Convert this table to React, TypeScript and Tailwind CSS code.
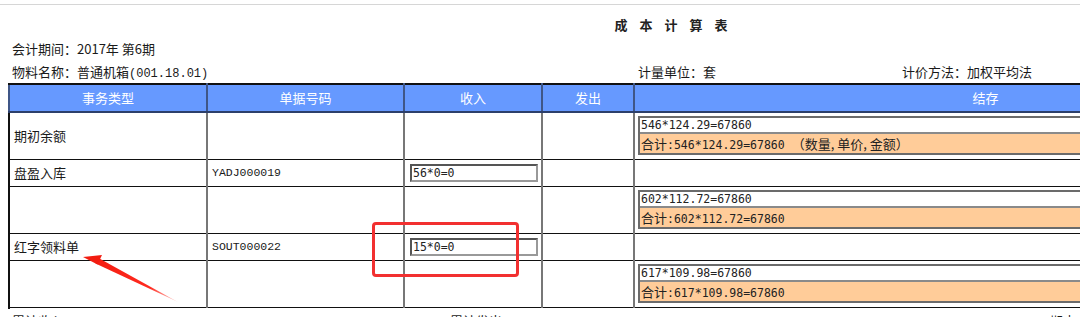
import React from "react"

const cjk = { fontFamily: '"Noto Sans CJK SC", "Noto Sans", sans-serif' }
const mono = { fontFamily: '"Liberation Mono", "Noto Sans CJK SC", monospace' }
const digits = { fontFamily: '"DejaVu Sans Mono", "Noto Sans CJK SC", monospace' }

type Row = {
  type: string
  code?: string
  income?: string
  balance?: [string, string]
  tall: boolean
}

const rows: Row[] = [
  {
    type: "期初余额",
    tall: true,
    balance: ["546*124.29=67860", "合计:546*124.29=67860 （数量,单价,金额）"],
  },
  { type: "盘盈入库", code: "YADJ000019", income: "56*0=0", tall: false },
  { type: "", tall: true, balance: ["602*112.72=67860", "合计:602*112.72=67860"] },
  { type: "红字领料单", code: "SOUT000022", income: "15*0=0", tall: false },
  { type: "", tall: true, balance: ["617*109.98=67860", "合计:617*109.98=67860"] },
]

function ValueInput({ value }: { value: string }) {
  return (
    <div
      className="ml-[1px] h-[18px] w-[128px] border-2 border-t-[#555] border-l-[#555] border-r-[#999] border-b-[#999] bg-white pl-px text-[11.5px] leading-[14px] text-[#222]"
      style={digits}
    >
      {value}
    </div>
  )
}

function BalanceBox({ lines }: { lines: [string, string] }) {
  return (
    <div className="ml-[2px] w-[460px] border-2 border-[#6b6b6b]">
      <div className="h-[16px] border-b-2 border-[#8a8a8a] bg-white pl-px text-[11.5px] leading-[15px] text-[#222]" style={digits}>
        {lines[0]}
      </div>
      <div className="h-[19px] bg-[#ffcc99] pl-px text-[11.5px] leading-[19px] text-[#222]" style={digits}>
        <span style={cjk} className="text-[13px]">{lines[1].slice(0, 2)}</span>
        {lines[1].slice(2).replace(/（.*）/, "")}
        {lines[1].includes("（") && (
          <span style={cjk} className="text-[13px]">
            （数量, 单价, 金额）
          </span>
        )}
      </div>
    </div>
  )
}

function Arrow() {
  return (
    <svg className="pointer-events-none absolute left-0 top-0" width="1080" height="317">
      <defs>
        <linearGradient id="tail" x1="178" y1="302" x2="83" y2="257" gradientUnits="userSpaceOnUse">
          <stop offset="0" stopColor="#ff3b2f" stopOpacity="0.2" />
          <stop offset="0.3" stopColor="#ff2a1f" />
          <stop offset="1" stopColor="#f21c10" />
        </linearGradient>
      </defs>
      <polygon points="178,302 95.5,263.5 98.5,258 " fill="url(#tail)" />
      <polygon points="83,257 102,255 97.5,264.5" fill="#f21c10" />
    </svg>
  )
}

export default function App() {
  return (
    <div className="relative h-[317px] w-[1080px] overflow-hidden bg-white text-[#1a1a1a]" style={cjk}>
      <div className="mt-[4px] h-px bg-[#d6d6d6]" />

      <div className="w-[1342px]">
        <div className="mt-[7px] flex h-[26px] justify-center gap-[12px] text-[13px] font-bold leading-[26px] text-[#222]">
          <span>成</span>
          <span>本</span>
          <span>计</span>
          <span>算</span>
          <span>表</span>
        </div>
        <div className="h-[22px] pl-[12px] text-[13px] leading-[22px]">会计期间：2017年 第6期</div>
        <div className="flex h-[23px] text-[13px] leading-[23px]">
          <span className="w-[638px] pl-[12px]">
            物料名称：普通机箱<span style={mono} className="text-[12px]">(001.18.01)</span>
          </span>
          <span className="w-[264px]">计量单位：套</span>
          <span>计价方法：加权平均法</span>
        </div>
      </div>

      <table className="ml-[8px] w-[1330px] table-fixed border-collapse text-[13px]">
        <colgroup>
          <col className="w-[198px]" />
          <col className="w-[197px]" />
          <col className="w-[138px]" />
          <col className="w-[92px]" />
          <col />
        </colgroup>
        <thead>
          <tr className="h-[28px] bg-[#6699ff] text-white">
            {["事务类型", "单据号码", "收入", "发出", "结存"].map((h) => (
              <th
                key={h}
                className="border-x-2 border-t-2 border-b-2 border-x-[#3f5687] border-t-[#111] border-b-[#2c3f6b] p-0 text-center font-normal leading-[24px]"
              >
                {h}
              </th>
            ))}
          </tr>
        </thead>
        <tbody>
          {rows.map((r, i) => (
            <tr key={i} className={r.tall ? "h-[47px]" : "h-[27px]"}>
              <td className="border-l-2 border-r-2 border-y border-l-[#111] border-r-[#777] border-y-[#111] pl-[4px] align-middle">
                {r.type}
              </td>
              <td className="border-x-2 border-y border-x-[#777] border-y-[#111] pl-[4px] align-middle text-[11.5px]" style={mono}>
                {r.code}
              </td>
              <td className="border-x-2 border-y border-x-[#777] border-y-[#111] pl-[4px] align-middle">
                {r.income && <ValueInput value={r.income} />}
              </td>
              <td className="border-x-2 border-y border-x-[#777] border-y-[#111] align-middle" />
              <td className="border-x-2 border-y border-x-[#777] border-y-[#111] pl-[1px] align-middle">
                {r.balance && <BalanceBox lines={r.balance} />}
              </td>
            </tr>
          ))}
          <tr className="h-[2px]">
            <td colSpan={5} className="border-l-2 border-l-[#111] p-0" />
          </tr>
        </tbody>
      </table>

      <div className="mt-[4px] flex text-[13px] leading-[16px]">
        <span className="w-[450px] pl-[12px]">累计收入：</span>
        <span className="w-[600px]">累计发出：</span>
        <span>期末</span>
      </div>

      <div className="pointer-events-none absolute left-[372px] top-[222px] h-[55px] w-[147px] rounded-[4px] border-[3px] border-[#f23030]" />
      <Arrow />
    </div>
  )
}
